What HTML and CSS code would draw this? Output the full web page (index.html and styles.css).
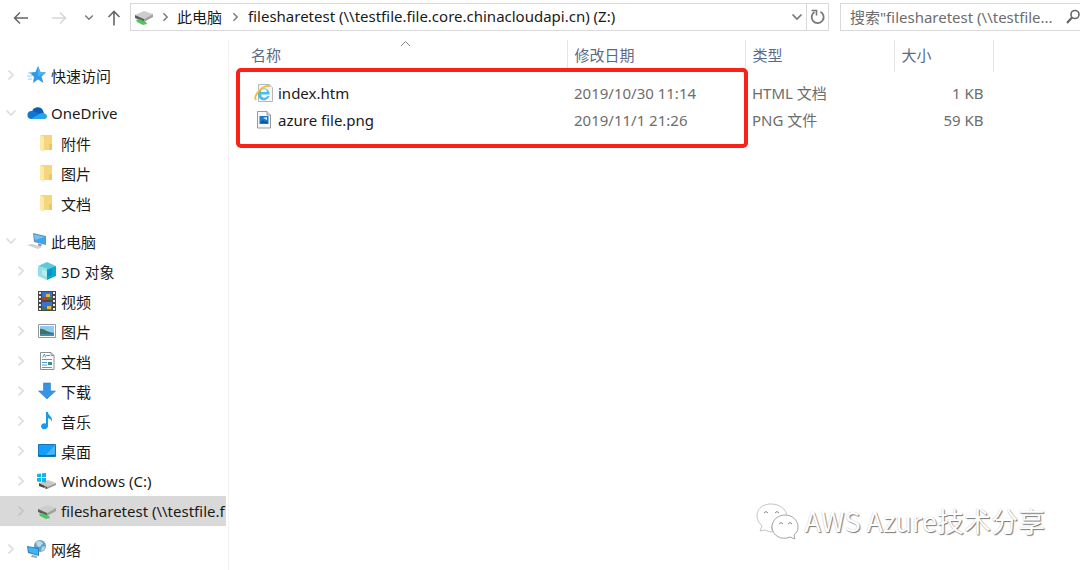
FILE: index.html
```html
<!DOCTYPE html>
<html lang="zh-CN">
<head>
    <meta charset="UTF-8">
    <meta name="viewport" content="width=device-width, initial-scale=1.0">
    <title>filesharetest (Z:)</title>
    <link rel="stylesheet" href="styles.css">
</head>
<body>
    <!-- shared icons -->
    <svg class="symbols" aria-hidden="true">
        <symbol id="i-right" viewBox="0 0 8 12"><path d="M1.500 1.500 6 6l-4.500 4.500" fill="none" stroke="currentColor" stroke-width="1.700"/></symbol>
        <symbol id="i-down" viewBox="0 0 12 8"><path d="M1.500 1.500 6 6l4.500-4.500" fill="none" stroke="currentColor" stroke-width="1.700"/></symbol>
        <symbol id="i-folder" viewBox="0 0 20 20">
            <path d="M4 2h11v15H4z" fill="#f5d67f"/>
            <path d="M3 2l4 2v15l-4-2z" fill="#ffe9a6"/>
            <path d="M12 11h3v6h-3z" fill="#edc766"/>
        </symbol>
        <symbol id="i-drive" viewBox="0 0 20 20">
            <path d="M1 8l9-4 9 3-9 5z" fill="#cdcdcd"/>
            <path d="M1 8l9 4v3l-9-4z" fill="#5c5c5c"/>
            <path d="M10 12l9-5v3l-9 5z" fill="#a2a2a2"/>
            <path d="M2 13l3-1 7 3 1 2-4 1-6-3z" fill="#50c463"/>
        </symbol>
    </svg>

    <header class="toolbar">
        <div class="nav-buttons">
            <button type="button" aria-label="后退"><svg width="16" height="14" viewBox="0 0 16 14"><path d="M15 7H2M7 1.500 1.500 7 7 12.500" fill="none" stroke="#666" stroke-width="1.500"/></svg></button>
            <button type="button" aria-label="前进"><svg width="16" height="14" viewBox="0 0 16 14"><path d="M1 7h13M9 1.500 14.500 7 9 12.500" fill="none" stroke="#d6d6d6" stroke-width="1.500"/></svg></button>
            <button type="button" aria-label="最近浏览的位置" class="small"><svg width="10" height="7"><use href="#i-down"/></svg></button>
            <button type="button" aria-label="上移"><svg width="14" height="16" viewBox="0 0 14 16"><path d="M7 15.500V2M1.500 7 7 1.500 12.500 7" fill="none" stroke="#666" stroke-width="1.600"/></svg></button>
        </div>
        <nav class="address" aria-label="地址">
            <svg class="icon" width="20" height="20"><use href="#i-drive"/></svg>
            <svg class="sep" width="7" height="10"><use href="#i-right"/></svg>
            <a href="#">此电脑</a>
            <svg class="sep" width="7" height="10"><use href="#i-right"/></svg>
            <a href="#">filesharetest (\\testfile.file.core.chinacloudapi.cn) (Z:)</a>
            <button type="button" class="history" aria-label="以前的位置"><svg width="12" height="8"><use href="#i-down"/></svg></button>
            <button type="button" class="refresh" aria-label="刷新"><svg width="16" height="16" viewBox="0 0 16 16"><path d="M10.500 2.800A6 6 0 1 1 4.500 3" fill="none" stroke="#777" stroke-width="1.800"/><path d="M1.500 1.500h5v5" fill="none" stroke="#777" stroke-width="1.600"/></svg></button>
        </nav>
        <form class="search">
            <input type="search" aria-label="搜索" placeholder='搜索"filesharetest (\\testfile...'>
            <svg width="14" height="16" viewBox="0 0 14 16"><circle cx="9" cy="5.500" r="4" fill="none" stroke="#666" stroke-width="1.600"/><path d="M6 8.500 1 14" stroke="#666" stroke-width="2.200"/></svg>
        </form>
    </header>

    <div class="window">
        <nav class="tree" aria-label="导航窗格">
            <ul>
                <li><a href="#">
                    <svg class="arrow"><use href="#i-right"/></svg>
                    <svg class="icon" viewBox="0 0 20 20"><path d="M11 1l2.500 6 5.500.5-4.500 4 2 6.500-5.500-3.500L6 18l1-6-4.500-4.500 6-.5z" fill="#2f9be8"/><path d="M11 1l2.500 6 5.500.5-8 4z" fill="#4cb4f4"/><path d="M1 8h4M0 11h5M1 14h4" stroke="#8ccdf6"/></svg>
                    <span>快速访问</span></a></li>
                <li><a href="#">
                    <svg class="arrow open"><use href="#i-down"/></svg>
                    <svg class="icon" viewBox="0 0 20 20"><path d="M5 8.500a6 6 0 0 1 11-1l1 3-6 4-8-4z" fill="#0a5fb4"/><path d="M4 16a4 4 0 0 1 1-8c3 0 5 2 7 3l-5 5z" fill="#1276d0"/><path d="M4 16l8-5c3-2 8-1 8 2.500 0 2-2 2.500-3 2.500z" fill="#27a4ea"/></svg>
                    <span>OneDrive</span></a>
                    <ul>
                        <li><a href="#"><i class="arrow"></i><svg class="icon"><use href="#i-folder"/></svg><span>附件</span></a></li>
                        <li><a href="#"><i class="arrow"></i><svg class="icon"><use href="#i-folder"/></svg><span>图片</span></a></li>
                        <li><a href="#"><i class="arrow"></i><svg class="icon"><use href="#i-folder"/></svg><span>文档</span></a></li>
                    </ul>
                </li>
                <li><a href="#">
                    <svg class="arrow open"><use href="#i-down"/></svg>
                    <svg class="icon" viewBox="0 0 20 20"><path d="M6 2l13 3v9L7 11z" fill="#7b8d9c"/><path d="M7 3.500l11 2.500v7L8 10.500z" fill="#38a8f3"/><path d="M7 3.500l11 2.500-10 3z" fill="#6fc3f8"/><path d="M0 14l5-1 10 3-4 2z" fill="#ccd1d5"/><path d="M11 12.500l4 1-1 2-3-1z" fill="#8d979f"/></svg>
                    <span>此电脑</span></a>
                    <ul>
                        <li><a href="#"><svg class="arrow"><use href="#i-right"/></svg>
                            <svg class="icon" viewBox="0 0 20 20"><path d="M1 5l9-4 9 4-9 3z" fill="#5ccbd9"/><path d="M1 5l9 3v11l-9-4z" fill="#8fe0e6"/><path d="M10 8l9-3v10l-9 4z" fill="#0fa5d3"/><path d="M5 8l5 2v6l-5-2z" fill="#b5ecef"/><path d="M10 10l5-2v6l-5 2z" fill="#0a94c6"/></svg>
                            <span>3D 对象</span></a></li>
                        <li><a href="#"><svg class="arrow"><use href="#i-right"/></svg>
                            <svg class="icon" viewBox="0 0 20 20"><path d="M1 0h18v20H1z" fill="#484848"/><path d="M5 1h10v8H5zM5 11h10v8H5z" fill="#3e70cf"/><path d="M5 6h6v3H5z" fill="#c23b25"/><path d="M9 3h4v3H9zM10 15h4v3h-4z" fill="#e9bd25"/><path d="M11 6h4v3h-4zM5 16h5v3H5z" fill="#367e45"/><path d="M3 1v18M17 1v18" stroke="#eee" stroke-width="2" stroke-dasharray="2 2"/></svg>
                            <span>视频</span></a></li>
                        <li><a href="#"><svg class="arrow"><use href="#i-right"/></svg>
                            <svg class="icon" viewBox="0 0 20 20"><path d="M1.500 3.500h17v13h-17z" fill="#fff" stroke="#999"/><path d="M3 5h14v10H3z" fill="#8ecaf1"/><path d="M3 8c3-1 6 3 14 4v3H3z" fill="#40745d"/><path d="M3 13h14v2H3z" fill="#4389b9"/></svg>
                            <span>图片</span></a></li>
                        <li><a href="#"><svg class="arrow"><use href="#i-right"/></svg>
                            <svg class="icon" viewBox="0 0 20 20"><path d="M3.500 1.500H14l3 3v14H3.500z" fill="#fff" stroke="#8f8f8f"/><path d="M14 1.500v3h3" fill="none" stroke="#8f8f8f"/><path d="M5.500 6.500 7.500 3l1 3.500M9 4.500h4M5 8.500h10M5 11.500h5M5 14h5M5 16.500h10" fill="none" stroke="#4a9ed5"/><path d="M11 11h4v3h-4z" fill="#3e8b91"/></svg>
                            <span>文档</span></a></li>
                        <li><a href="#"><svg class="arrow"><use href="#i-right"/></svg>
                            <svg class="icon" viewBox="0 0 20 20"><path d="M6.500 2h7v8h5L10 18 1.500 10h5z" fill="#3594e5" stroke="#2a80cc" stroke-width=".6"/></svg>
                            <span>下载</span></a></li>
                        <li><a href="#"><svg class="arrow"><use href="#i-right"/></svg>
                            <svg class="icon" viewBox="0 0 20 20"><path d="M9 1h2c0 4 5 4 4 10-1-3-2-3-4-4v8a3.500 3 0 1 1-2-2.500z" fill="#139bee"/></svg>
                            <span>音乐</span></a></li>
                        <li><a href="#"><svg class="arrow"><use href="#i-right"/></svg>
                            <svg class="icon" viewBox="0 0 20 20"><path d="M1.500 3.500h17v12h-17z" fill="#159dfb" stroke="#1673b6"/><path d="M18 4v9L8 15z" fill="#48b5fc"/><path d="M2 14h16v1H2z" fill="#0d69ac"/></svg>
                            <span>桌面</span></a></li>
                        <li><a href="#"><svg class="arrow"><use href="#i-right"/></svg>
                            <svg class="icon" viewBox="0 0 20 20"><path d="M2 12l9-3 8 3-9 4z" fill="#c9c9c9"/><path d="M2 12l8 4v2l-8-3z" fill="#444"/><path d="M10 16l9-4v2l-9 4z" fill="#989898"/><path d="M0 3l4-.5V6H0zM5 2.300 9 2v4H5zM0 7h4v4l-4-.5zM5 7h4v4.500L5 11z" fill="#10b5ed"/><path d="M7 16l2 1" stroke="#63db6f"/></svg>
                            <span>Windows (C:)</span></a></li>
                        <li><a href="#" class="selected" aria-current="true"><svg class="arrow"><use href="#i-right"/></svg>
                            <svg class="icon"><use href="#i-drive"/></svg>
                            <span>filesharetest (\\testfile.f</span></a></li>
                    </ul>
                </li>
                <li><a href="#">
                    <svg class="arrow"><use href="#i-right"/></svg>
                    <svg class="icon" viewBox="0 0 20 20"><circle cx="13" cy="7" r="6" fill="#6b9fc0"/><path d="M9 3c3-2 5-1 7 1l-3 4-3-1zM15 8l3-1-1 4-3 1z" fill="#b8dbea"/><path d="M0 7l12 2v8L1 14z" fill="#2680be"/><path d="M1 8l10 2v6L2 13z" fill="#42b4f5"/><path d="M5 16l5 1v2l-6-1z" fill="#9aa7af"/></svg>
                    <span>网络</span></a></li>
            </ul>
        </nav>

        <main class="files">
            <svg class="sort" width="11" height="7" viewBox="0 0 11 7"><path d="M1 6l4.500-4.500L10 6" fill="none" stroke="#888"/></svg>
            <table>
                <thead>
                    <tr>
                        <th class="name">名称</th>
                        <th class="date">修改日期</th>
                        <th class="type">类型</th>
                        <th class="size">大小</th>
                    </tr>
                </thead>
                <tbody>
                    <tr>
                        <td class="name"><a href="#">
                            <svg class="icon" viewBox="0 0 20 20"><path d="M4.500 1.500H15l3.500 3v14h-14z" fill="#f7f7f7" stroke="#b8b8b8"/><path d="M15.500 11.500H7a3.500 3.500 0 0 0 6.500 1.500h2A6 6 0 1 1 15.500 9.500zM7 9h6a3 3 0 0 0-6 0z" fill="#4fbbea"/><path d="M2 17C-1 13 8 2 16 3" fill="none" stroke="#eebf35" stroke-width="1.800"/></svg>
                            index.htm</a></td>
                        <td>2019/10/30 11:14</td>
                        <td>HTML 文档</td>
                        <td class="number">1 KB</td>
                    </tr>
                    <tr>
                        <td class="name"><a href="#">
                            <svg class="icon" viewBox="0 0 20 20"><path d="M3.500 1.500H13l3.500 3.500v13h-13z" fill="#f7f7f7" stroke="#999"/><path d="M13 1.500V5h3.500" fill="#ddd" stroke="#999"/><path d="M5.500 6h9v8h-9z" fill="#1678cf"/><path d="M6 13l3-3 2 2 1-1 2 2z" fill="#0b519d"/><path d="M9 8l4-1v3z" fill="#d8edfc"/></svg>
                            azure file.png</a></td>
                        <td>2019/11/1 21:26</td>
                        <td>PNG 文件</td>
                        <td class="number">59 KB</td>
                    </tr>
                </tbody>
            </table>
            <div class="highlight"></div>
        </main>
    </div>

    <div class="watermark">
        <svg width="44" height="38" viewBox="0 0 44 38" fill="#fff" stroke="#a5a5a5">
            <path d="M5 28l2-5C-3 13 3 1 16 1c9 0 15 5 16 12-12 0-18 9-14 16-4 0-6-1-8-2z" stroke="#c4c4c4"/>
            <path d="M17 24c0-7 6-12 13-12s13 5 13 12c0 4-2 6-4 8l1 4-5-2c-9 4-18-2-18-10z"/>
            <path d="M9 10q2-3 4 0M20 10q2-3 4 0M24 21q2-3 4 0M33 21q2-3 4 0" fill="none" stroke="#888"/>
        </svg>
        <span>AWS Azure技术分享</span>
    </div>
</body>
</html>
```
FILE: styles.css
```css
* {
    margin: 0;
    padding: 0;
    box-sizing: border-box;
}
body {
    background: #fff;
    color: #1a1a1a;
    font-family: "Noto Sans", "Noto Sans CJK SC", sans-serif;
    font-size: 15px;
    min-height: 100vh;
    display: flex;
    flex-direction: column;
    overflow: hidden;
}
a {
    color: inherit;
    text-decoration: none;
}
button {
    background: none;
    border: none;
    display: flex;
    align-items: center;
    justify-content: center;
    color: #777;
}
ul {
    list-style: none;
}
.symbols {
    position: absolute;
    width: 0;
    height: 0;
}
.icon {
    width: 20px;
    height: 20px;
    flex: none;
}

/* toolbar */
.toolbar {
    display: flex;
    padding-top: 3px;
    height: 31px;
}
.nav-buttons {
    display: flex;
    width: 130px;
    padding-left: 13px;
    padding-top: 1px;
    gap: 22px;
    flex: none;
}
.nav-buttons .small {
    margin: 0 -9px 0 -5px;
}
.address {
    flex: 1;
    display: flex;
    align-items: center;
    border: 1px solid #d9d9d9;
    padding-left: 3px;
    min-width: 0;
    white-space: nowrap;
}
.address a {
    padding-bottom: 2px;
}
.address .sep {
    margin: 0 8px;
    flex: none;
    color: #777;
}
.address a + .sep {
    margin: 0 9px 0 10px;
}
.address .history {
    width: 18px;
    margin-left: auto;
}
.address .refresh {
    width: 22px;
    height: 100%;
    border-left: 1px solid #d9d9d9;
}
.search {
    width: 240px;
    flex: none;
    margin-left: 11px;
    display: flex;
    align-items: center;
    border: 1px solid #d9d9d9;
    border-right: none;
    padding-left: 9px;
}
.search input {
    flex: 1;
    min-width: 0;
    border: none;
    outline: none;
    background: none;
    font: inherit;
    appearance: none;
}
.search input::-webkit-search-cancel-button {
    display: none;
}
.search input::placeholder {
    color: #6d6d6d;
}

/* navigation pane */
.window {
    flex: 1;
    display: flex;
    padding-top: 9px;
}
.tree {
    width: 229px;
    flex: none;
    padding-top: 20px;
    padding-right: 2px;
    border-right: 1px solid #f2f2f2;
}
.tree > ul {
    display: flex;
    flex-direction: column;
    gap: 8px;
}
.tree a {
    display: flex;
    align-items: center;
    height: 30px;
    padding-left: 7px;
    overflow: hidden;
    white-space: nowrap;
}
.tree ul ul a {
    padding-left: 17px;
}
.tree .arrow {
    width: 8px;
    height: 12px;
    margin-right: 12px;
    color: #dcdcdc;
    flex: none;
}
.tree .arrow.open {
    width: 12px;
    height: 8px;
    margin-left: -2px;
    margin-right: 10px;
}
.tree .icon {
    margin-right: 4px;
}
.tree .selected {
    background: #d9d9d9;
}
.tree .selected .arrow {
    color: #c4c4c4;
}

/* file list */
.files {
    flex: 1;
    min-width: 0;
    position: relative;
}
.files table {
    border-collapse: collapse;
    table-layout: fixed;
    width: 765px;
}
.files th {
    height: 32px;
    border-right: 1px solid #e5e5e5;
    color: #5b6b86;
    font-weight: normal;
    text-align: left;
    padding-left: 7px;
    padding-bottom: 3px;
}
.files th.name {
    width: 338px;
    padding-left: 22px;
}
.files th.date {
    width: 178px;
}
.files th.type {
    width: 149px;
}
.files tbody::before {
    content: "";
    display: block;
    height: 8px;
}
.files td {
    height: 27px;
    padding-left: 7px;
    padding-bottom: 2px;
    color: #6d6d6d;
}
.files td.name {
    padding-left: 25px;
    color: #1a1a1a;
}
.files td.name a {
    display: flex;
    align-items: center;
    gap: 4px;
}
.files td.number {
    text-align: right;
    padding-right: 10px;
}
.sort {
    position: absolute;
    left: 171px;
    top: 0;
}
.highlight {
    position: absolute;
    left: 7px;
    top: 28px;
    width: 512px;
    height: 80px;
    border: 4px solid #fb2018;
    border-radius: 5px;
}

.watermark {
    position: absolute;
    right: 35px;
    bottom: 29px;
    display: flex;
    align-items: center;
    gap: 5px;
    color: #fff;
    font-family: "Noto Sans CJK SC", sans-serif;
    font-size: 27px;
    line-height: 40px;
    text-shadow: 1px 1px 1px #777, 0 0 1px #bbb;
}
.watermark svg {
    margin-top: 2px;
}
```
